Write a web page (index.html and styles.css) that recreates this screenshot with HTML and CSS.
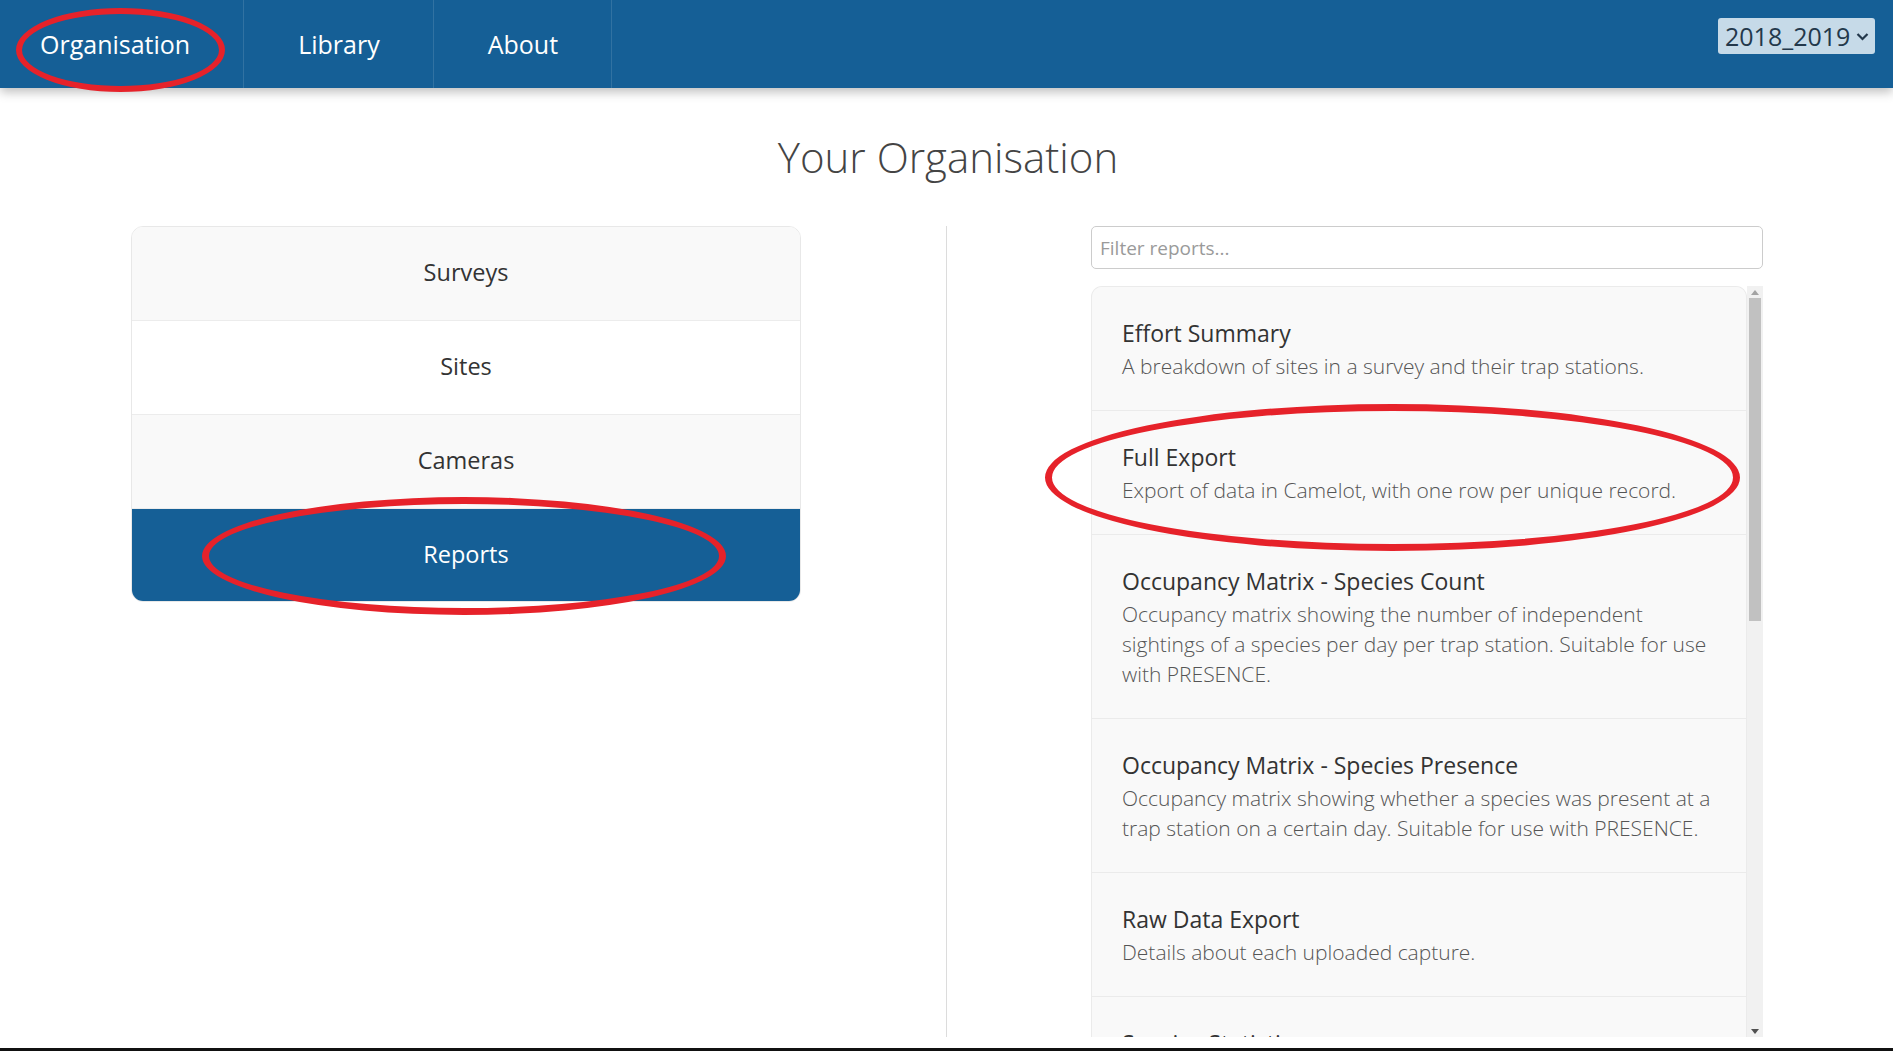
FILE: index.html
```html
<!DOCTYPE html>
<html lang="en">
<head>
<meta charset="utf-8">
<title>Your Organisation</title>
<link rel="stylesheet" href="styles.css">
</head>
<body>
<div class="page">
  <header class="topbar">
    <nav class="nav">
      <a class="nav-item nav-first">Organisation</a>
      <a class="nav-item">Library</a>
      <a class="nav-item">About</a>
    </nav>
    <div class="year-select">
      <span class="year-text">2018_2019</span>
      <svg class="chev" width="13" height="9" viewBox="0 0 13 9"><polyline points="1.5,2 6.5,7 11.5,2" fill="none" stroke="#23384b" stroke-width="2.2"/></svg>
    </div>
  </header>

  <main class="main">
    <h1 class="title">Your Organisation</h1>
    <div class="content">
      <div class="left-col">
        <ul class="menu">
          <li class="menu-item stripe">Surveys</li>
          <li class="menu-item">Sites</li>
          <li class="menu-item stripe">Cameras</li>
          <li class="menu-item active">Reports</li>
        </ul>
      </div>
      <div class="right-col">
        <input class="filter" type="text" placeholder="Filter reports...">
        <div class="report-box">
          <div class="report-list">
            <div class="report">
              <div class="report-title">Effort Summary</div>
              <div class="report-desc">A breakdown of sites in a survey and their trap stations.</div>
            </div>
            <div class="report">
              <div class="report-title">Full Export</div>
              <div class="report-desc">Export of data in Camelot, with one row per unique record.</div>
            </div>
            <div class="report">
              <div class="report-title">Occupancy Matrix - Species Count</div>
              <div class="report-desc">Occupancy matrix showing the number of independent sightings of a species per day per trap station. Suitable for use with PRESENCE.</div>
            </div>
            <div class="report">
              <div class="report-title">Occupancy Matrix - Species Presence</div>
              <div class="report-desc">Occupancy matrix showing whether a species was present at a trap station on a certain day. Suitable for use with PRESENCE.</div>
            </div>
            <div class="report">
              <div class="report-title">Raw Data Export</div>
              <div class="report-desc">Details about each uploaded capture.</div>
            </div>
            <div class="report">
              <div class="report-title">Species Statistics</div>
              <div class="report-desc">Summary of each species across the survey.</div>
            </div>
          </div>
          <div class="scrollbar">
            <div class="sb-btn"><svg width="8" height="5" viewBox="0 0 8 5"><polygon points="0,5 8,5 4,0" fill="#a3a3a3"/></svg></div>
            <div class="sb-track">
              <div class="sb-thumb"></div>
            </div>
            <div class="sb-btn"><svg width="8" height="5" viewBox="0 0 8 5"><polygon points="0,0 8,0 4,5" fill="#505050"/></svg></div>
          </div>
        </div>
      </div>
    </div>
  </main>
  <div class="bottom-bar"></div>
</div>

<div class="annot annot-nav"></div>
<div class="annot annot-reports"></div>
<div class="annot annot-export"></div>
</body>
</html>
```

FILE: styles.css
```css
* { box-sizing: border-box; }

html, body {
  margin: 0;
  padding: 0;
  background: #ffffff;
  font-family: "Open Sans", "Noto Sans", "Liberation Sans", sans-serif;
  color: #333333;
}

.page {
  height: 1051px;
  display: flex;
  flex-direction: column;
  overflow: hidden;
}

/* ---------- top bar ---------- */
.topbar {
  position: relative;
  z-index: 2;
  height: 88px;
  flex: 0 0 88px;
  background: #155f96;
  display: flex;
  align-items: stretch;
  box-shadow: 0 4px 10px rgba(0, 0, 0, 0.26);
}

.nav {
  display: flex;
}

.nav-item {
  display: block;
  padding: 0 53px 0 54px;
  line-height: 88px;
  font-size: 25px;
  color: #ffffff;
  border-right: 1px solid rgba(255, 255, 255, 0.12);
  text-decoration: none;
}

.nav-first {
  padding-left: 40px;
}

.year-select {
  margin: 18px 18px 0 auto;
  width: 157px;
  height: 36px;
  background: #c6dae8;
  border-radius: 3px;
  display: flex;
  align-items: center;
  padding: 0 6px 0 7px;
  color: #23384b;
  font-size: 25px;
  line-height: 36px;
}

.chev {
  margin-left: auto;
}

/* ---------- main ---------- */
.main {
  flex: 1;
  min-height: 0;
  padding: 0 130px 0 131px;
}

.title {
  margin: 46px 0 46px;
  text-align: center;
  font-weight: 300;
  font-size: 42px;
  line-height: 46px;
  color: #444444;
  padding-left: 2px;
}

.content {
  display: grid;
  grid-template-columns: 816px 1fr;
  grid-template-rows: minmax(0, 1fr);
  height: 811px;
}

.left-col {
  border-right: 1px solid #dcdcdc;
  min-height: 0;
}

.menu {
  list-style: none;
  margin: 0;
  padding: 0;
  width: 670px;
  border: 1px solid #e8e8e8;
  border-radius: 12px;
  overflow: hidden;
}

.menu-item {
  height: 94px;
  line-height: 90px;
  text-align: center;
  font-size: 23.5px;
  color: #333333;
  background: #ffffff;
  border-bottom: 1px solid #ececec;
}

.menu-item.stripe {
  background: #f9f9f9;
}

.menu-item.active {
  background: #155f96;
  color: #ffffff;
  border-bottom: none;
  height: 92px;
}

/* ---------- right column ---------- */
.right-col {
  min-height: 0;
  overflow: hidden;
  padding-left: 144px;
  display: flex;
  flex-direction: column;
  gap: 16px;
}

.filter {
  flex: 0 0 43px;
  width: 672px;
  height: 43px;
  border: 1px solid #cccccc;
  border-radius: 5px;
  padding: 0 8px;
  font-family: "Open Sans", "Noto Sans", sans-serif;
  font-size: 19px;
  color: #555555;
  background: #ffffff;
  outline: none;
}

.filter::placeholder {
  color: #9a9a9a;
}

.report-box {
  flex: 1;
  min-height: 0;
  width: 672px;
  display: flex;
  margin-top: 1px;
}

.report-list {
  flex: 1;
  min-height: 0;
  overflow: hidden;
  border: 1px solid #ebebeb;
  border-bottom: none;
  border-radius: 11px 11px 0 0;
  background: #f9f9f9;
}

.report {
  padding: 28px 25px 29px 30px;
  border-bottom: 1px solid #ebebeb;
  background: #f9f9f9;
}

.report-title {
  font-size: 23px;
  line-height: 36px;
  color: #333333;
}

.report-desc {
  font-size: 21px;
  line-height: 30px;
  font-weight: 300;
  color: #555555;
}

/* fake scrollbar */
.scrollbar {
  width: 16px;
  flex: 0 0 16px;
  background: #f1f1f1;
  display: flex;
  flex-direction: column;
}

.sb-btn {
  flex: 0 0 12px;
  height: 12px;
  display: flex;
  align-items: center;
  justify-content: center;
}

.sb-track {
  flex: 1;
  padding: 0 2px;
}

.sb-thumb {
  height: 323px;
  background: #c1c1c1;
}

.bottom-bar {
  height: 3px;
  flex: 0 0 3px;
  background: #111111;
  margin-top: 11px;
}

/* ---------- red annotation ellipses ---------- */
.annot {
  position: absolute;
  border: 7px solid #e6222a;
  border-radius: 50%;
  z-index: 5;
  pointer-events: none;
}

.annot-nav {
  left: 16px;
  top: 8px;
  width: 209px;
  height: 84px;
  border-width: 6px;
}

.annot-reports {
  left: 202px;
  top: 497px;
  width: 524px;
  height: 118px;
}

.annot-export {
  left: 1045px;
  top: 404px;
  width: 695px;
  height: 147px;
}
```
